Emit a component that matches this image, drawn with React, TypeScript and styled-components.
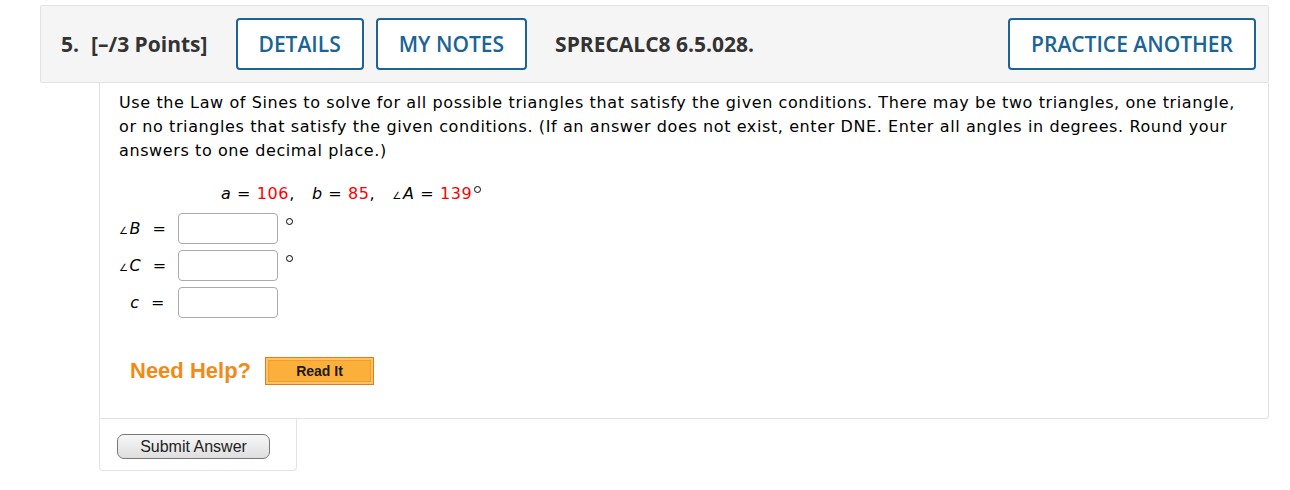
import React from 'react';
import styled, { createGlobalStyle } from 'styled-components';

const GlobalStyle = createGlobalStyle`
  html, body {
    margin: 0;
    padding: 0;
    background: #fff;
  }
`;

const Page = styled.div`
  padding: 5px 0 0 40px;
  width: 1229px;
`;

const Header = styled.div`
  display: flex;
  align-items: center;
  height: 76px;
  background: #f5f5f5;
  border: 1px solid #e2e2e2;
  border-radius: 2px;
  padding: 0 12px 0 20px;
  font-family: 'Open Sans', 'DejaVu Sans', sans-serif;
  color: #333;
`;

const QNum = styled.span`
  font-size: 21px;
  font-weight: 700;
  margin-right: 12px;
`;

const Points = styled.span`
  font-size: 21px;
  font-weight: 700;
  margin-right: 28px;
`;

const HeadButton = styled.button<{ $push?: boolean }>`
  height: 52px;
  padding: 0 21px;
  margin-right: ${(p) => (p.$push ? '0' : '12px')};
  margin-left: ${(p) => (p.$push ? 'auto' : '0')};
  background: #fff;
  border: 2px solid #1a6496;
  border-radius: 4px;
  color: #1a6496;
  font-family: 'Open Sans', sans-serif;
  font-size: 21px;
  font-weight: 600;
  cursor: pointer;
`;

const Ref = styled.span`
  font-size: 21px;
  font-weight: 700;
  margin-left: 16px;
`;

const Panel = styled.div`
  margin-left: 59px;
  height: 327px;
  border: 1px solid #e2e2e2;
  border-top: none;
  border-bottom-right-radius: 4px;
  background: #fff;
  padding: 8px 20px 0 19px;
  font-family: 'DejaVu Sans', Verdana, sans-serif;
  font-size: 16px;
  letter-spacing: 0.6px;
  color: #000;
`;

const Prompt = styled.p`
  margin: 0;
  line-height: 24px;
`;

const Given = styled.div`
  margin: 19px 0 0 102px;
  line-height: 24px;
  white-space: pre;
`;

const Var = styled.i`
  font-style: oblique;
`;

const Val = styled.span`
  color: #f00;
`;

const Angle = styled.span`
  font-size: 10px;
  margin-right: 1px;
`;

const Ring = styled.span`
  display: inline-block;
  box-sizing: border-box;
  width: 7px;
  height: 7px;
  border: 1.6px solid currentColor;
  border-radius: 50%;
  vertical-align: 6px;
  margin-left: 2px;
`;

const Rows = styled.div`
  display: flex;
  flex-direction: column;
  gap: 6px;
  margin-top: 5px;
`;

const Row = styled.div`
  display: flex;
  align-items: center;
  height: 31px;
`;

const Label = styled.span`
  width: 46px;
  text-align: right;
  margin-right: 13px;
  white-space: pre;
`;

const Answer = styled.input`
  box-sizing: border-box;
  width: 100px;
  height: 31px;
  border: 1px solid #aaa;
  border-radius: 4px;
  background: #fff;
  margin: 0;
`;

const Deg = styled.span`
  align-self: flex-start;
  box-sizing: border-box;
  width: 7px;
  height: 7px;
  margin: 5px 0 0 8px;
  border: 1.6px solid #000;
  border-radius: 50%;
`;

const Help = styled.div`
  display: flex;
  align-items: center;
  margin: 39px 0 0 11px;
  gap: 14px;
`;

const HelpText = styled.span`
  font-family: 'Liberation Sans', Arial, sans-serif;
  font-weight: 700;
  font-size: 22px;
  letter-spacing: 0;
  color: #f28a17;
`;

const ReadIt = styled.button`
  width: 109px;
  height: 28px;
  padding: 0;
  background: #fbb03b;
  border: 1px solid #e37b16;
  box-shadow: inset 0 0 0 2px #fcc46a, inset 0 0 0 3px #f59c24;
  font-family: 'Liberation Sans', Arial, sans-serif;
  font-weight: 700;
  font-size: 14px;
  color: #1a1a1a;
  cursor: pointer;
`;

const SubmitBox = styled.div`
  margin-left: 59px;
  width: 198px;
  height: 52px;
  border: 1px solid #e2e2e2;
  border-top: none;
  border-radius: 0 0 4px 4px;
  display: flex;
  align-items: center;
  padding-left: 17px;
  box-sizing: border-box;
`;

const Submit = styled.button`
  width: 153px;
  height: 25px;
  padding: 0;
  margin-top: 4px;
  border: 1px solid #777;
  border-radius: 7px;
  background: linear-gradient(#f7f7f7, #dedede);
  font-family: 'Liberation Sans', Arial, sans-serif;
  font-size: 16px;
  color: #222;
  cursor: pointer;
`;

export default function App() {
  return (
    <>
      <GlobalStyle />
      <Page>
        <Header>
          <QNum>5.</QNum>
          <Points>[–/3 Points]</Points>
          <HeadButton>DETAILS</HeadButton>
          <HeadButton>MY NOTES</HeadButton>
          <Ref>SPRECALC8 6.5.028.</Ref>
          <HeadButton $push>PRACTICE ANOTHER</HeadButton>
        </Header>
        <Panel>
          <Prompt>
            Use the Law of Sines to solve for all possible triangles that satisfy the given conditions. There may be two
            triangles, one triangle, or no triangles that satisfy the given conditions. (If an answer does not exist,
            enter DNE. Enter all angles in degrees. Round your answers to one decimal place.)
          </Prompt>
          <Given>
            <Var>a</Var> = <Val>106</Val>,{'   '}<Var>b</Var> = <Val>85</Val>,{'   '}
            <Angle>∠</Angle>
            <Var>A</Var> = <Val>139</Val>
            <Ring />
          </Given>
          <Rows>
            <Row>
              <Label>
                <Angle>∠</Angle>
                <Var>B</Var>{'  '}=
              </Label>
              <Answer />
              <Deg />
            </Row>
            <Row>
              <Label>
                <Angle>∠</Angle>
                <Var>C</Var>{'  '}=
              </Label>
              <Answer />
              <Deg />
            </Row>
            <Row>
              <Label>
                <Var>c</Var>{'  '}=
              </Label>
              <Answer />
            </Row>
          </Rows>
          <Help>
            <HelpText>Need Help?</HelpText>
            <ReadIt>Read It</ReadIt>
          </Help>
        </Panel>
        <SubmitBox>
          <Submit>Submit Answer</Submit>
        </SubmitBox>
      </Page>
    </>
  );
}
